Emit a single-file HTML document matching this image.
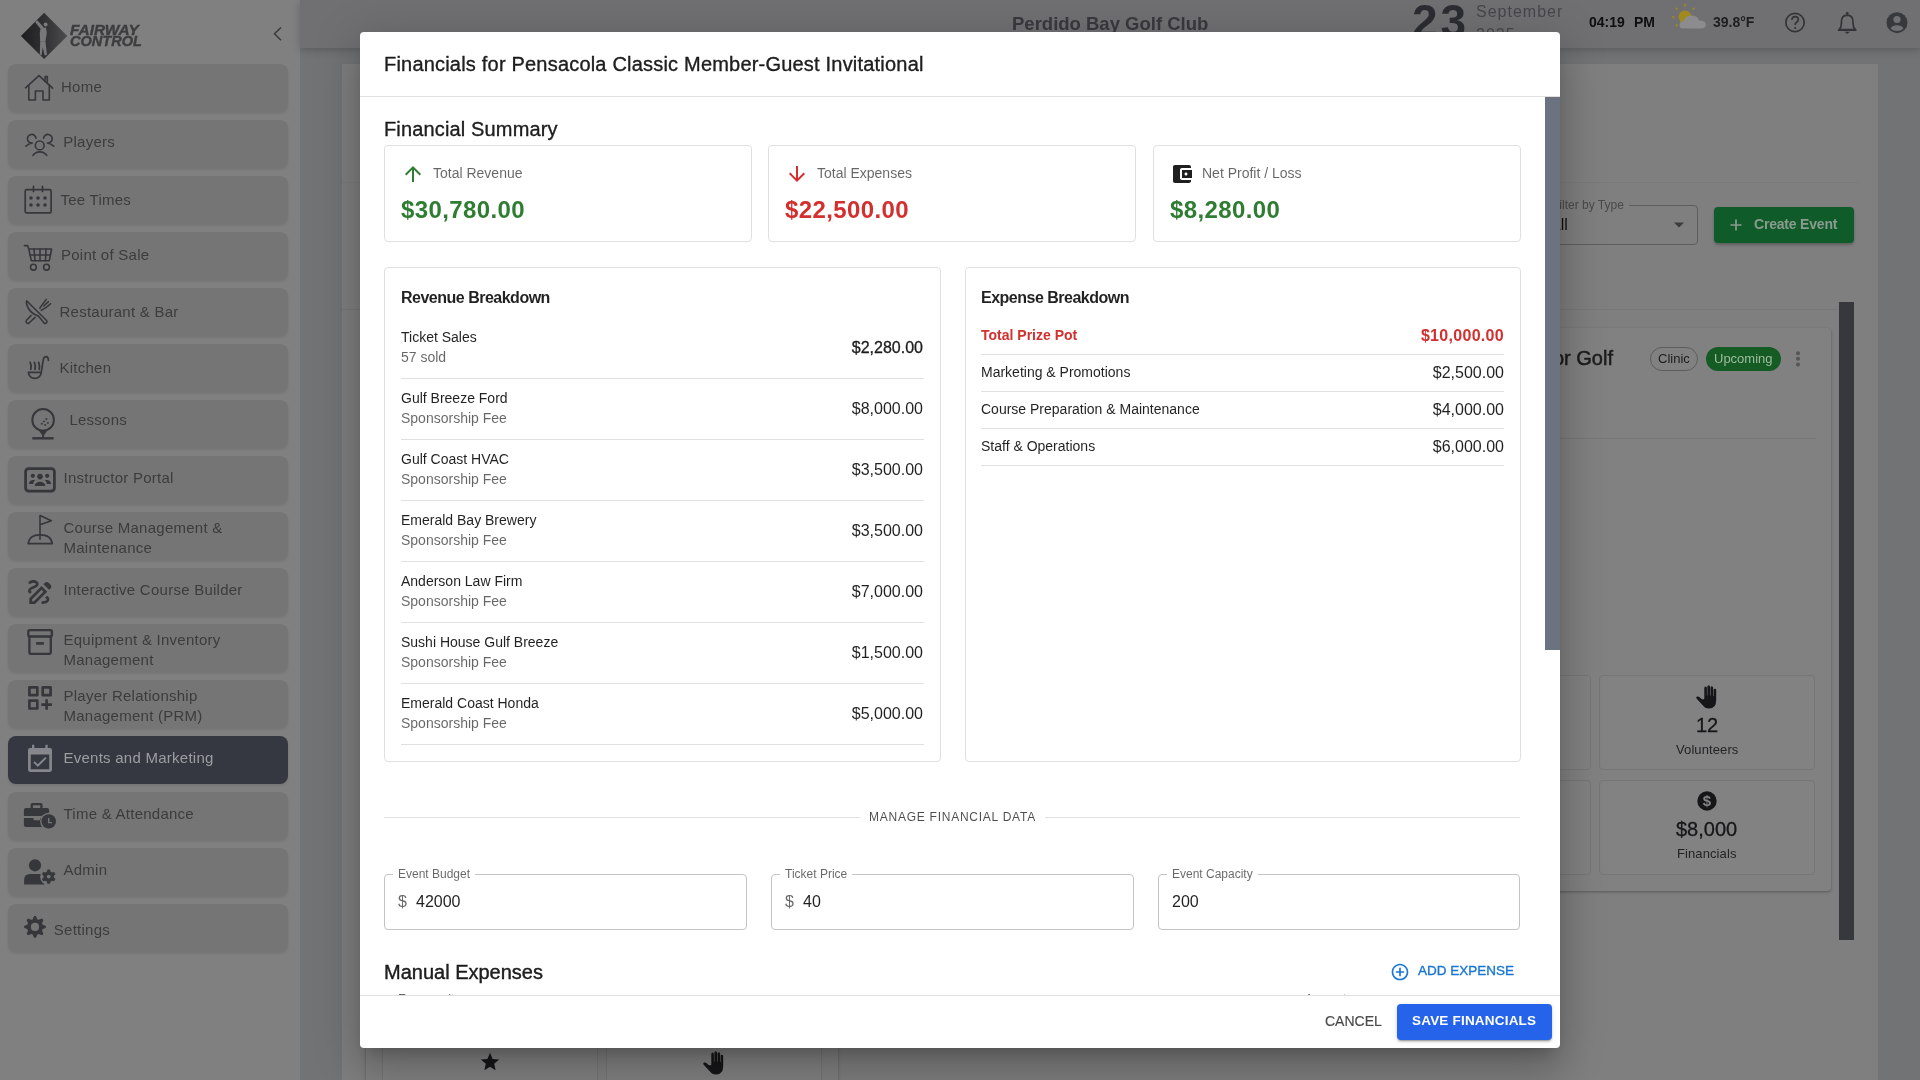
<!DOCTYPE html>
<html><head><meta charset="utf-8">
<style>
*{box-sizing:border-box;margin:0;padding:0}
html,body{width:1920px;height:1080px;overflow:hidden;background:#727375;font-family:"Liberation Sans",sans-serif}
body>*{will-change:transform}
.abs{position:absolute}
/* sidebar */
#sb{position:absolute;left:0;top:0;width:300px;height:1080px;background:#808080}
.it{position:absolute;left:8px;width:280px;height:48px;background:#757575;border-radius:8px;box-shadow:0 2px 3px rgba(0,0,0,0.08)}
.it.act{background:#363841}
.it .t{position:absolute;left:56px;top:0;font-size:15px;color:#3c3c3c;line-height:20px;white-space:nowrap;letter-spacing:0.25px}
.it.act .t{color:#9c9ea2}
.it svg{position:absolute}
/* header */
#hd{position:absolute;left:300px;top:0;width:1620px;height:48px;background:#707072;box-shadow:0 2px 8px rgba(0,0,0,0.22)}
#panel{position:absolute;left:342px;top:64px;width:1536px;height:1016px;background:#7f7f7f}
#modal{position:absolute;left:360px;top:32px;width:1200px;height:1016px;background:#fff;border-radius:4px;box-shadow:0 11px 15px -7px rgba(0,0,0,.2),0 24px 38px 3px rgba(0,0,0,.14),0 9px 46px 8px rgba(0,0,0,.12);overflow:hidden;color:rgba(0,0,0,0.87)}

.m{position:absolute;white-space:nowrap;line-height:20px}
.card{position:absolute;border:1px solid #e0e0e0;border-radius:4px;background:#fff}
.hr{position:absolute;height:1px;background:#e0e0e0}
.p{font-size:14px;color:rgba(0,0,0,0.87)}
.s{font-size:14px;color:rgba(0,0,0,0.6)}
.amt{font-size:16px;color:rgba(0,0,0,0.87);text-align:right}
.tf{position:absolute;top:842px;height:56px;border:1px solid #c4c4c4;border-radius:4px}
.tf .lb{position:absolute;left:8px;top:-9px;background:#fff;padding:0 5px;font-size:12px;line-height:16px;color:rgba(0,0,0,0.6)}
.tf .ad{position:absolute;left:13px;top:17px;font-size:16px;line-height:20px;color:rgba(0,0,0,0.6)}
.tf .v{position:absolute;top:17px;font-size:16px;line-height:20px;color:rgba(0,0,0,0.87)}
.sbox{border:1px solid #767676;border-radius:4px;background:#828282}
</style></head><body>
<div id="sb">
<div style="position:absolute;left:70px;top:25px;width:80px;height:24px;font-style:italic;font-weight:700;color:#3d3d3f;font-size:14px;line-height:10.6px;-webkit-text-stroke:0.4px #3d3d3f">
<div style="transform:scaleX(1.10);transform-origin:left top;white-space:nowrap">FAIRWAY</div><div style="transform:scaleX(1.04);transform-origin:left top;white-space:nowrap">CONTROL</div></div>
  <div class="it" style="top:64px"><div class="t" style="left:53px;top:13px">Home</div></div>
  <div class="it" style="top:120px"><div class="t" style="left:55.25px;top:12px">Players</div></div>
  <div class="it" style="top:176px"><div class="t" style="left:52.5px;top:14px">Tee Times</div></div>
  <div class="it" style="top:232px"><div class="t" style="left:53px;top:13px">Point of Sale</div></div>
  <div class="it" style="top:288px"><div class="t" style="left:51.5px;top:14px">Restaurant &amp; Bar</div></div>
  <div class="it" style="top:344px"><div class="t" style="left:51.5px;top:14px">Kitchen</div></div>
  <div class="it" style="top:400px"><div class="t" style="left:61.4px;top:10px">Lessons</div></div>
  <div class="it" style="top:456px"><div class="t" style="left:55.5px;top:12px">Instructor Portal</div></div>
  <div class="it" style="top:512px"><div class="t" style="left:55.5px;top:6px">Course Management &amp;<br>Maintenance</div></div>
  <div class="it" style="top:568px"><div class="t" style="left:55.5px;top:12px">Interactive Course Builder</div></div>
  <div class="it" style="top:624px"><div class="t" style="left:55.5px;top:6px">Equipment &amp; Inventory<br>Management</div></div>
  <div class="it" style="top:680px"><div class="t" style="left:55.5px;top:6px">Player Relationship<br>Management (PRM)</div></div>
  <div class="it act" style="top:736px"><div class="t" style="left:55.5px;top:12px">Events and Marketing</div></div>
  <div class="it" style="top:792px"><div class="t" style="left:55.5px;top:12px">Time &amp; Attendance</div></div>
  <div class="it" style="top:848px"><div class="t" style="left:55.5px;top:12px">Admin</div></div>
  <div class="it" style="top:904px"><div class="t" style="left:45.8px;top:16px">Settings</div></div>
</div>
<!--SB--><svg id="sbicons" style="position:absolute;left:0;top:0" width="300" height="1080" viewBox="0 0 300 1080">
<g fill="none" stroke="#36373b" stroke-width="1.6" stroke-linecap="round" stroke-linejoin="round">
 <!-- home -->
 <path d="M25.5 87.8 L39 75.6 L52.6 88.2"/>
 <path d="M28.8 85 V100 H35.4 V91 H43 V100 H49.3 V85"/>
 <path d="M45.1 81.6 V76.6 H47.3 V83.6"/>
 <!-- players -->
 <path d="M36 138.3 A4.3 4.3 0 1 0 32.2 143 Q28.3 143.6 25.9 146.2"/>
 <path d="M43.6 138.3 A4.3 4.3 0 1 1 47.4 143 Q51.3 143.6 53.8 146.2"/>
 <circle cx="39.7" cy="145.4" r="4.4"/>
 <path d="M33 155.3 A8.5 8.5 0 0 1 46.7 155.3"/>
 <!-- tee times -->
 <rect x="25.2" y="189.7" width="25.9" height="23.2" rx="1.5" stroke-width="1.7"/>
 <path d="M33.5 186.3 V191.5 M42.5 186.3 V191.5" stroke-width="1.7"/>
 <!-- cart -->
 <path d="M24.4 245.6 H27.6 L28.8 249 H51.6 L49.3 260.7 H31.3 L28.8 249"/>
 <path d="M30 255 H50.5 M34 249 L35 260.7 M40 249 V260.7 M46 249 L45.5 260.7"/>
 <circle cx="33.4" cy="267.2" r="2.9"/><circle cx="46.5" cy="267.2" r="2.9"/>
 <!-- restaurant -->
 <path d="M26.6 300.8 L46.8 320.8 A1.9 1.9 0 0 1 44.3 323.3 L39.6 317.6 Q38.7 315.6 36.3 315.1 Q31.4 313.6 28.2 308 Q26 303.6 26.6 300.8 Z"/>
 <path d="M31 315.6 L26.5 320.2 A1.9 1.9 0 0 0 29 323 L35.1 317.4"/>
 <path d="M39.8 308.2 L46.2 299.4 M43.8 306 L48.4 301.6 M41.3 310.3 Q46.5 307.8 50.6 303.7"/>
 <!-- kitchen -->
 <path d="M28.4 372.3 H41.2 A6.4 6 0 0 1 28.4 372.3 Z" stroke-width="1.7"/>
 <path d="M41.2 372.8 L43.3 359.6 Q43.9 356.6 46 356.6 Q48.4 356.7 48.4 360.3" stroke-width="1.7"/>
 <path d="M30.2 362.4 Q31.6 365.8 30.8 369.4 M34.4 362.4 Q35.8 365.8 35 369.4 M38.6 362.4 Q40 365.8 39.2 369.4" stroke-width="1.8"/>
 <!-- lessons -->
 <circle cx="43.1" cy="419.9" r="10.8" stroke-width="2"/>
 <path d="M32.3 438.3 H53.6" stroke-width="2.4" stroke-linecap="butt"/>
 <path d="M43.1 430.7 V437.5" stroke-width="2"/>
 <!-- flag -->
 <path d="M40 539.3 V515.6 L51.4 520.7 L40 524.8"/>
 <path d="M28.1 543.6 Q29 534.8 40 534.8 Q51.3 534.8 52.2 543.6 Z" stroke-width="1.7"/>
 <!-- equipment -->
 <rect x="28.3" y="630.1" width="23.6" height="6.4" rx="1.6" stroke-width="2.3"/>
 <path d="M29.4 636.5 V652.5 Q29.4 653.8 30.8 653.8 H49.5 Q50.8 653.8 50.8 652.5 V636.5" stroke-width="2.3"/>
 <!-- prm -->
 <rect x="29.4" y="687.3" width="7.9" height="7.9" stroke-width="2.7" stroke-linecap="butt"/>
 <rect x="42.7" y="687.3" width="7.9" height="7.9" stroke-width="2.7" stroke-linecap="butt"/>
 <rect x="29.4" y="700.6" width="7.9" height="7.9" stroke-width="2.7" stroke-linecap="butt"/>
 <path d="M41.3 704.6 H51.9 M46.6 699.2 V709.8" stroke-width="2.6" stroke-linecap="butt"/>
 <!-- instructor -->
 <rect x="25.6" y="468.6" width="28.8" height="22.5" rx="3" stroke-width="2.8"/>
</g>
<g fill="#36373b">
 <circle cx="31" cy="198" r="1.8"/><circle cx="38" cy="198" r="1.8"/><circle cx="45" cy="198" r="1.8"/>
 <circle cx="31" cy="205" r="1.8"/><circle cx="38" cy="205" r="1.8"/><circle cx="45" cy="205" r="1.8"/>
 <path d="M38.6 430.2 H47.6 L43.8 435.6 H42.4 Z"/>
 <circle cx="46.4" cy="419" r="0.95"/><circle cx="44" cy="421.4" r="0.95"/><circle cx="47.9" cy="422.9" r="0.95"/><circle cx="41.8" cy="423.8" r="0.95"/><circle cx="45.1" cy="424.9" r="0.95"/>
 <rect x="36.1" y="642.1" width="7.8" height="2.6"/>
 <!-- instructor people -->
 <circle cx="32.8" cy="475.8" r="2.1"/><circle cx="40" cy="476.6" r="2.8"/><circle cx="47.2" cy="475.8" r="2.1"/>
 <path d="M34.6 486 Q35.5 481.8 40 481.8 Q44.5 481.8 45.4 486 Z"/>
 <path d="M28.8 484 Q29.4 480.2 33 480 H35.2 Q33.4 481.6 33.2 484 Z"/>
 <path d="M51.2 484 Q50.6 480.2 47 480 H44.8 Q46.6 481.6 46.8 484 Z"/>
 <!-- course builder (MUI DrawOutlined scaled) -->
 <g transform="translate(24 576) scale(1.333)"><path d="M18.85 10.39l1.06-1.06c.78-.78.78-2.05 0-2.83L18.5 5.09c-.78-.78-2.05-.78-2.83 0l-1.06 1.06 4.24 4.24zm-5.66-2.83L4 16.76V21h4.24l9.19-9.19-4.24-4.25zM7.41 19H6v-1.41l7.19-7.19 1.41 1.41L7.41 19zM19 17.5c0 2.19-2.54 3.5-5 3.5-.55 0-1-.45-1-1s.45-1 1-1c1.54 0 3-.73 3-1.5 0-.47-.48-.87-1.23-1.2l1.48-1.48c1.06.63 1.75 1.45 1.75 2.68zM4.58 13.35C3.61 12.79 3 12.06 3 11c0-1.8 1.89-2.63 3.560-3.36C7.59 7.18 9 6.56 9 6c0-.41-.78-1-2-1-1.26 0-1.8.61-1.83.64-.35.41-.98.46-1.4.12-.41-.34-.49-.95-.15-1.38C3.73 4.24 4.76 3 7 3s4 1.32 4 3c0 1.87-1.930 2.72-3.64 3.47C6.42 9.88 5 10.5 5 11c0 .31.43.6 1.07.86l-1.49 1.49z"/></g>
 <!-- time & attendance -->
 <path d="M30.6 808 V805 Q30.6 803 32.6 803 H40.6 Q42.6 803 42.6 805 V808 H47 Q49.1 808 49.1 810 V816 H23.9 V810 Q23.9 808 26 808 Z M32.9 808 H40.3 V805.2 H32.9 Z" fill-rule="evenodd"/>
 <path d="M23.9 818 H33.6 V820.3 H40.2 V818 H42 V827 H26 Q23.9 827 23.9 825 Z"/>
 <circle cx="48.7" cy="821.4" r="8.6" fill="#757575"/>
 <circle cx="48.7" cy="821.4" r="7.2"/>
 <!-- admin -->
 <circle cx="35" cy="865.3" r="6.1"/>
 <path d="M24.1 884.6 V880 Q24.1 873.9 30 873.9 H40 Q44.7 873.9 44.7 878 V884.6 Z"/>
 <circle cx="48.7" cy="876.6" r="8.6" fill="#757575"/>
 <path d="M46.84 871.75 L47.35 869.53 L50.05 869.53 L50.56 871.75 L51.97 872.56 L54.15 871.90 L55.50 874.23 L53.84 875.79 L53.84 877.41 L55.50 878.97 L54.15 881.30 L51.97 880.64 L50.56 881.45 L50.05 883.67 L47.35 883.67 L46.84 881.45 L45.43 880.64 L43.25 881.30 L41.90 878.97 L43.56 877.41 L43.56 875.79 L41.90 874.23 L43.25 871.90 L45.43 872.56Z"/>
 <circle cx="48.7" cy="876.6" r="1.9" fill="#757575"/>
 <!-- settings -->
 <path d="M32.56 919.39 L34.06 916.04 L35.94 916.04 L37.44 919.39 L38.59 919.86 L42.01 918.56 L43.34 919.89 L42.04 923.31 L42.51 924.46 L45.86 925.96 L45.86 927.84 L42.51 929.34 L42.04 930.49 L43.34 933.91 L42.01 935.24 L38.59 933.94 L37.44 934.41 L35.94 937.76 L34.06 937.76 L32.56 934.41 L31.41 933.94 L27.99 935.24 L26.66 933.91 L27.96 930.49 L27.49 929.34 L24.14 927.84 L24.14 925.96 L27.49 924.46 L27.96 923.31 L26.66 919.89 L27.99 918.56 L31.41 919.86Z"/>
 <circle cx="35" cy="926.9" r="4.1" fill="#757575"/>
</g>
<path d="M48.7 818 V822.6 H52" fill="none" stroke="#757575" stroke-width="1.4"/>
<!-- events (active) -->
<g fill="none" stroke="#85878c" stroke-width="2.7">
 <path d="M29.4 754 V769.6 Q29.4 770.7 30.6 770.7 H49.4 Q50.6 770.7 50.6 769.6 V754"/>
 <path d="M34 761.9 L37.8 765.6 L45.9 757.6" stroke-width="2"/>
</g>
<g fill="#85878c">
 <path d="M28 754.6 V750 Q28 748 30 748 H50 Q52 748 52 750 V754.6 Z"/>
 <rect x="32" y="744.8" width="2.3" height="4"/><rect x="45.4" y="744.8" width="2.3" height="4"/>
</g>
<!-- chevron -->
<path d="M281 27.5 L274.5 33.8 L281 40.2" fill="none" stroke="#3a3a3a" stroke-width="1.5"/>
<!-- logo -->
<defs><linearGradient id="lg" x1="0" x2="1" y1="0" y2="0"><stop offset="0" stop-color="#1e1e20"/><stop offset="0.45" stop-color="#2e2e30"/><stop offset="1" stop-color="#4c4c4f"/></linearGradient></defs>
<path d="M44.1 12.7 L67.3 36 L44.1 59 L20.9 36 Z" fill="url(#lg)"/>
<g fill="#78787a">
<path d="M35.4 22.4 Q35.8 20.2 37.6 20.6 L43.8 27.4 L42.6 29.6 L37.2 24.6 Q36.6 24.4 36.8 23.2 L41.8 28.8 L41 29.2 Z"/>
<circle cx="45.6" cy="24.4" r="2"/>
<path d="M40.6 28.4 L46 27.6 L46.8 33 L45.4 41.8 L40.2 41.8 L39.8 33 Z"/>
<path d="M40.2 41.4 L45.4 41.4 L47 54.8 L44.6 55.6 L42.8 47.2 L41.6 55.4 L39.8 54.6 Z"/>
</g>
</svg><!--/SB-->
<div id="hd"></div>
<div id="panel"></div>
<!--BG-->
<!-- header content -->
<div class="abs" style="left:1012px;top:12px;font-size:18.5px;line-height:24px;font-weight:700;color:#38393e;white-space:nowrap">Perdido Bay Golf Club</div>
<div class="abs" style="left:1412px;top:-5px;font-size:46px;line-height:52px;font-weight:700;color:#2c2d32;white-space:nowrap;letter-spacing:3px">23</div>
<div class="abs" style="left:1476px;top:2px;font-size:16px;line-height:20px;letter-spacing:1px;color:#46474b;white-space:nowrap">September</div>
<div class="abs" style="left:1476px;top:25px;font-size:16px;line-height:20px;letter-spacing:1px;color:#46474b;white-space:nowrap">2025</div>
<div class="abs" style="left:1589px;top:12px;font-size:14px;line-height:20px;font-weight:700;color:#0e0e10;white-space:nowrap">04:19</div>
<div class="abs" style="left:1634px;top:12px;font-size:14px;line-height:20px;font-weight:700;color:#0e0e10;white-space:nowrap">PM</div>
<div class="abs" style="left:1713px;top:12px;font-size:14px;line-height:20px;font-weight:700;color:#1e1e21;white-space:nowrap">39.8°F</div>
<svg class="abs" style="left:1660px;top:0" width="260" height="48" viewBox="1660 0 260 48">
  <g fill="#a08a1c">
   <circle cx="1685" cy="17" r="6.5"/>
   <path d="M1685 6.5 v-2.5 M1677.5 9.5 l-1.8-1.8 M1674.5 17 h-2.6 M1677.5 24.5 l-1.8 1.8 M1692.5 9.5 l1.8-1.8" stroke="#a08a1c" stroke-width="1.6"/>
  </g>
  <path d="M1683 28.5 Q1679.5 28.5 1679.5 25 Q1679.5 21.5 1683.5 21.3 Q1685 15.5 1691.5 15.5 Q1697.5 15.5 1699 20.5 Q1705.8 20.5 1705.8 24.5 Q1705.8 28.5 1701 28.5 Z" fill="#8c8c8e"/>
  <circle cx="1795" cy="22.5" r="9.2" fill="none" stroke="#333437" stroke-width="1.7"/>
  <path d="M1792 19.8 Q1792 16.6 1795.2 16.6 Q1798.3 16.6 1798.3 19.5 Q1798.3 21.3 1796.2 22.5 Q1795.2 23.2 1795.2 25" fill="none" stroke="#333437" stroke-width="1.7"/>
  <circle cx="1795.2" cy="28" r="1.1" fill="#333437"/>
  <path d="M1847.2 13.5 Q1847.2 12 1847.2 12 M1840.2 29.5 H1854.2 M1838.6 30.2 Q1841.4 27.6 1841.4 23.8 V21.6 Q1841.4 15.6 1847.2 15.2 Q1853 15.6 1853 21.6 V23.8 Q1853 27.6 1855.8 30.2 Z" fill="none" stroke="#333437" stroke-width="1.7" stroke-linejoin="round"/>
  <circle cx="1847.2" cy="13.2" r="1.3" fill="#333437"/>
  <path d="M1844.5 31.8 H1850 L1847.2 34 Z" fill="#333437"/>
  <circle cx="1897" cy="22.7" r="10.5" fill="#38393c"/>
  <circle cx="1897" cy="19.5" r="3.6" fill="#6f7072"/>
  <path d="M1890.5 28.5 Q1892.5 25.2 1897 25.2 Q1901.5 25.2 1903.5 28.5 Q1901 31 1897 31 Q1893 31 1890.5 28.5 Z" fill="#6f7072"/>
</svg>
<!-- panel content -->
<div class="abs" style="left:342px;top:182px;width:1516px;height:1px;background:#7a7a7a"></div>
<div class="abs" style="left:1420px;top:205px;width:278px;height:40px;border:1px solid #5e5e5e;border-radius:4px"></div>
<div class="abs" style="left:1548px;top:198px;background:#7f7f7f;padding:0 5px 0 4px;font-size:12px;line-height:14px;color:#4a4a4c;white-space:nowrap">Filter by Type</div>
<div class="abs" style="left:1550px;top:215px;font-size:16px;line-height:20px;color:#101012;white-space:nowrap">All</div>
<svg class="abs" style="left:1672px;top:221px" width="14" height="8" viewBox="0 0 14 8"><path d="M2 1.5 H12 L7 6.5 Z" fill="#3c3c3e"/></svg>
<div class="abs" style="left:1714px;top:207px;width:140px;height:36px;background:#0f5c2a;border-radius:4px;box-shadow:0 2px 3px rgba(0,0,0,0.25)"></div>
<svg class="abs" style="left:1728px;top:217px" width="16" height="16" viewBox="0 0 16 16"><path d="M8 2.5 V13.5 M2.5 8 H13.5" stroke="#8a9a8c" stroke-width="1.7"/></svg>
<div class="abs" style="left:1754px;top:214px;font-size:14px;line-height:20px;font-weight:700;color:#8b9b8d;white-space:nowrap;letter-spacing:-0.2px">Create Event</div>
<div class="abs" style="left:342px;top:309px;width:1496px;height:1px;background:#777"></div>
<div class="abs" style="left:1839px;top:302px;width:15px;height:638px;background:#36383d"></div>
<!-- right card -->
<div class="abs" style="left:1359px;top:328px;width:472px;height:563px;background:#818181;border-radius:4px;box-shadow:0 1px 3px rgba(0,0,0,0.3)"></div>
<div class="abs" style="left:1480px;top:346px;font-size:20px;line-height:24px;color:#1c1c1e;white-space:nowrap;text-align:right;width:133px;letter-spacing:0px;-webkit-text-stroke:0.5px #1c1c1e">Junior Golf</div>
<div class="abs" style="left:1650px;top:347px;width:48px;height:24px;border:1px solid #5d5d5f;border-radius:12px"></div>
<div class="abs" style="left:1658px;top:349px;font-size:13px;line-height:20px;color:#1c1c1e;white-space:nowrap">Clinic</div>
<div class="abs" style="left:1706px;top:347px;width:75px;height:24px;background:#145c23;border-radius:12px"></div>
<div class="abs" style="left:1714px;top:349px;font-size:13px;line-height:20px;color:#9fbb9f;white-space:nowrap;letter-spacing:0px">Upcoming</div>
<svg class="abs" style="left:1794px;top:349px" width="8" height="20"><circle cx="4" cy="4.3" r="2" fill="#555558"/><circle cx="4" cy="9.8" r="2" fill="#555558"/><circle cx="4" cy="15.6" r="2" fill="#555558"/></svg>
<div class="abs" style="left:1375px;top:438px;width:441px;height:1px;background:#767676"></div>
<div class="abs sbox" style="left:1375px;top:675px;width:216px;height:95px"></div>
<div class="abs sbox" style="left:1599px;top:675px;width:216px;height:95px"></div>
<div class="abs sbox" style="left:1375px;top:780px;width:216px;height:95px"></div>
<div class="abs sbox" style="left:1599px;top:780px;width:216px;height:95px"></div>
<svg class="abs" style="left:1695px;top:684px" width="24" height="25" viewBox="0 0 24 25"><path d="M9.3 4 Q9.3 2.4 10.6 2.4 Q11.9 2.4 11.9 4 V11.5 H12.4 V2.8 Q12.4 1.2 13.7 1.2 Q15 1.2 15 2.8 V11.5 H15.5 V3.8 Q15.5 2.3 16.8 2.3 Q18.1 2.3 18.1 3.8 V12 H18.6 V6.2 Q18.6 4.8 19.9 4.8 Q21.2 4.8 21.2 6.2 V16 Q21.2 24.5 14 24.5 Q10 24.5 7.5 21 L1.5 14.5 Q0.8 13.3 2 12.6 Q3.2 12 4.4 13 L6.3 14.8 Q8 15.8 9.3 14.8 Z" fill="#161618"/></svg>
<div class="abs" style="left:1696px;top:713px;font-size:20px;line-height:24px;color:#17171a;white-space:nowrap;-webkit-text-stroke:0.3px #17171a">12</div>
<div class="abs" style="left:1676px;top:741px;font-size:13px;line-height:18px;color:#232326;white-space:nowrap;letter-spacing:0.1px">Volunteers</div>
<svg class="abs" style="left:1697px;top:791px" width="20" height="20" viewBox="0 0 20 20"><circle cx="10" cy="10" r="9.7" fill="#161618"/><text x="10" y="15.3" text-anchor="middle" font-family="Liberation Sans" font-weight="700" font-size="15" fill="#858585">$</text></svg>
<div class="abs" style="left:1676px;top:817px;font-size:20px;line-height:24px;color:#17171a;white-space:nowrap;-webkit-text-stroke:0.3px #17171a">$8,000</div>
<div class="abs" style="left:1677px;top:845px;font-size:13px;line-height:18px;color:#232326;white-space:nowrap;letter-spacing:0.1px">Financials</div>
<!-- left card bottom -->
<div class="abs" style="left:366px;top:328px;width:472px;height:800px;background:#818181;border-radius:4px;box-shadow:0 1px 3px rgba(0,0,0,0.3)"></div>
<div class="abs sbox" style="left:382px;top:1040px;width:216px;height:95px"></div>
<div class="abs sbox" style="left:606px;top:1040px;width:216px;height:95px"></div>
<svg class="abs" style="left:479px;top:1051px" width="22" height="22" viewBox="0 0 24 24"><path d="M12 17.27L18.18 21l-1.64-7.03L22 9.24l-7.19-.61L12 2 9.19 8.63 2 9.24l5.46 4.73L5.82 21z" fill="#161618"/></svg>
<svg class="abs" style="left:702px;top:1050px" width="24" height="25" viewBox="0 0 24 25"><path d="M9.3 4 Q9.3 2.4 10.6 2.4 Q11.9 2.4 11.9 4 V11.5 H12.4 V2.8 Q12.4 1.2 13.7 1.2 Q15 1.2 15 2.8 V11.5 H15.5 V3.8 Q15.5 2.3 16.8 2.3 Q18.1 2.3 18.1 3.8 V12 H18.6 V6.2 Q18.6 4.8 19.9 4.8 Q21.2 4.8 21.2 6.2 V16 Q21.2 24.5 14 24.5 Q10 24.5 7.5 21 L1.5 14.5 Q0.8 13.3 2 12.6 Q3.2 12 4.4 13 L6.3 14.8 Q8 15.8 9.3 14.8 Z" fill="#161618"/></svg>
<!--/BG-->

<div id="modal">
  <div class="m" style="left:24px;top:22px;font-size:20px;line-height:20px;-webkit-text-stroke:0.35px rgba(0,0,0,0.87);letter-spacing:0.2px">Financials for Pensacola Classic Member-Guest Invitational</div>
  <div class="hr" style="left:0;top:64px;width:1200px"></div>
  <div id="content" style="position:absolute;left:0;top:65px;width:1200px;height:898px;overflow:hidden">
    <div style="position:absolute;left:0;top:-65px;width:1200px;height:1200px">
    <div class="m" style="left:24px;top:87px;font-size:20px;letter-spacing:0.15px;-webkit-text-stroke:0.35px rgba(0,0,0,0.87)">Financial Summary</div>
    <div class="card" style="left:24px;top:113px;width:368px;height:97px"></div>
    <div class="card" style="left:408px;top:113px;width:368px;height:97px"></div>
    <div class="card" style="left:793px;top:113px;width:368px;height:97px"></div>
    
    <svg class="abs" style="left:41px;top:130px" width="24" height="24" viewBox="0 0 24 24"><path fill="#2e7d32" d="M4 12l1.41 1.41L11 7.83V20h2V7.83l5.58 5.59L20 12l-8-8-8 8z"/></svg>
    <svg class="abs" style="left:425px;top:130px" width="24" height="24" viewBox="0 0 24 24"><path fill="#d32f2f" d="M20 12l-1.41-1.41L13 16.17V4h-2v12.17l-5.58-5.59L4 12l8 8 8-8z"/></svg>
    <svg class="abs" style="left:810px;top:130px" width="24" height="24" viewBox="0 0 24 24"><path fill="#1f1f1f" d="M21 18v1c0 1.1-.9 2-2 2H5c-1.11 0-2-.9-2-2V5c0-1.1.89-2 2-2h14c1.1 0 2 .9 2 2v1h-9c-1.11 0-2 .9-2 2v8c0 1.1.89 2 2 2h9zm-9-2h10V8H12v8zm4-2.5c-.83 0-1.5-.67-1.5-1.5s.67-1.5 1.5-1.5 1.5.67 1.5 1.5-.67 1.5-1.5 1.5z"/></svg>
<div class="m s" style="left:73px;top:131px">Total Revenue</div>
    <div class="m s" style="left:457px;top:131px">Total Expenses</div>
    <div class="m s" style="left:842px;top:131px">Net Profit / Loss</div>
    <div class="m" style="left:41px;top:166px;font-size:24px;line-height:24px;font-weight:700;letter-spacing:0.4px;color:#2e7d32">$30,780.00</div>
    <div class="m" style="left:425px;top:166px;font-size:24px;line-height:24px;font-weight:700;letter-spacing:0.4px;color:#d32f2f">$22,500.00</div>
    <div class="m" style="left:810px;top:166px;font-size:24px;line-height:24px;font-weight:700;letter-spacing:0.4px;color:#2e7d32">$8,280.00</div>

    <div class="card" style="left:24px;top:235px;width:557px;height:495px"></div>
    <div class="card" style="left:605px;top:235px;width:556px;height:495px"></div>
    <div class="m" style="left:41px;top:255px;font-size:16px;font-weight:700;letter-spacing:-0.5px;top:256px">Revenue Breakdown</div>
    <div class="m" style="left:621px;top:255px;font-size:16px;font-weight:700;letter-spacing:-0.5px;top:256px">Expense Breakdown</div>
    <div class="m p" style="left:41px;top:295px">Ticket Sales</div><div class="m s" style="left:41px;top:315px">57 sold</div><div class="m amt" style="right:637px;top:306px;-webkit-text-stroke:0.3px rgba(0,0,0,0.87)">$2,280.00</div><div class="hr" style="left:41px;top:346px;width:523px"></div>
<div class="m p" style="left:41px;top:356px">Gulf Breeze Ford</div><div class="m s" style="left:41px;top:376px">Sponsorship Fee</div><div class="m amt" style="right:637px;top:367px;">$8,000.00</div><div class="hr" style="left:41px;top:407px;width:523px"></div>
<div class="m p" style="left:41px;top:417px">Gulf Coast HVAC</div><div class="m s" style="left:41px;top:437px">Sponsorship Fee</div><div class="m amt" style="right:637px;top:428px;">$3,500.00</div><div class="hr" style="left:41px;top:468px;width:523px"></div>
<div class="m p" style="left:41px;top:478px">Emerald Bay Brewery</div><div class="m s" style="left:41px;top:498px">Sponsorship Fee</div><div class="m amt" style="right:637px;top:489px;">$3,500.00</div><div class="hr" style="left:41px;top:529px;width:523px"></div>
<div class="m p" style="left:41px;top:539px">Anderson Law Firm</div><div class="m s" style="left:41px;top:559px">Sponsorship Fee</div><div class="m amt" style="right:637px;top:550px;">$7,000.00</div><div class="hr" style="left:41px;top:590px;width:523px"></div>
<div class="m p" style="left:41px;top:600px">Sushi House Gulf Breeze</div><div class="m s" style="left:41px;top:620px">Sponsorship Fee</div><div class="m amt" style="right:637px;top:611px;">$1,500.00</div><div class="hr" style="left:41px;top:651px;width:523px"></div>
<div class="m p" style="left:41px;top:661px">Emerald Coast Honda</div><div class="m s" style="left:41px;top:681px">Sponsorship Fee</div><div class="m amt" style="right:637px;top:672px;">$5,000.00</div><div class="hr" style="left:41px;top:712px;width:523px"></div>

    <div class="m" style="left:621px;top:293px;font-size:14px;font-weight:700;color:#d32f2f">Total Prize Pot</div><div class="m" style="right:56px;top:294px;font-size:16px;font-weight:700;color:#d32f2f;letter-spacing:0.3px">$10,000.00</div><div class="hr" style="left:621px;top:322px;width:523px"></div>
<div class="m p" style="left:621px;top:330px">Marketing &amp; Promotions</div><div class="m amt" style="right:56px;top:331px">$2,500.00</div><div class="hr" style="left:621px;top:359px;width:523px"></div>
<div class="m p" style="left:621px;top:367px">Course Preparation &amp; Maintenance</div><div class="m amt" style="right:56px;top:368px">$4,000.00</div><div class="hr" style="left:621px;top:396px;width:523px"></div>
<div class="m p" style="left:621px;top:404px">Staff &amp; Operations</div><div class="m amt" style="right:56px;top:405px">$6,000.00</div><div class="hr" style="left:621px;top:433px;width:523px"></div>


    <div class="hr" style="left:24px;top:785px;width:476px"></div>
    <div class="hr" style="left:685px;top:785px;width:475px"></div>
    <div class="m" style="left:509px;top:775px;font-size:12px;letter-spacing:0.75px;color:rgba(0,0,0,0.7)">MANAGE FINANCIAL DATA</div>

    <div class="tf" style="left:24px;width:363px"><div class="lb">Event Budget</div><div class="ad">$</div><div class="v" style="left:31px">42000</div></div>
    <div class="tf" style="left:411px;width:363px"><div class="lb">Ticket Price</div><div class="ad">$</div><div class="v" style="left:31px">40</div></div>
    <div class="tf" style="left:798px;width:362px"><div class="lb">Event Capacity</div><div class="v" style="left:13px">200</div></div>

    <div class="m" style="left:24px;top:930px;font-size:20px;-webkit-text-stroke:0.4px rgba(0,0,0,0.87)">Manual Expenses</div>
    <div class="m" style="left:1058px;top:929px;font-size:13.5px;color:#1976d2;letter-spacing:0px;-webkit-text-stroke:0.35px #1976d2">ADD EXPENSE</div>
    <svg class="abs" style="left:1030px;top:930px" width="20" height="20" viewBox="0 0 24 24"><path fill="#1976d2" d="M13 7h-2v4H7v2h4v4h2v-4h4v-2h-4V7zm-1-5C6.48 2 2 6.48 2 12s4.48 10 10 10 10-4.48 10-10S17.52 2 12 2zm0 18c-4.41 0-8-3.59-8-8s3.59-8 8-8 8 3.59 8 8-3.59 8-8 8z"/></svg>
    <div class="tf" style="left:24px;top:967px;width:800px"><div class="lb">Expense Item</div></div>
    <div class="tf" style="left:931px;top:967px;width:229px"><div class="lb">Amount</div></div>
    </div>
    <div style="position:absolute;left:1185px;top:0;width:15px;height:553px;background:#6b7380"></div>
  </div>
  <div class="hr" style="left:0;top:963px;width:1200px"></div>
  <div class="m" style="left:965px;top:979px;font-size:14px;letter-spacing:0px;color:rgba(0,0,0,0.7);-webkit-text-stroke:0.2px rgba(0,0,0,0.6)">CANCEL</div>
  <div style="position:absolute;left:1037px;top:972px;width:155px;height:36px;background:#2563eb;border-radius:4px;box-shadow:0 3px 1px -2px rgba(0,0,0,.2),0 2px 2px 0 rgba(0,0,0,.14),0 1px 5px 0 rgba(0,0,0,.12)"></div>
  <div class="m" style="left:1052px;top:979px;font-size:13.5px;font-weight:700;color:#fff;letter-spacing:0.2px">SAVE FINANCIALS</div>
</div>
</body></html>
